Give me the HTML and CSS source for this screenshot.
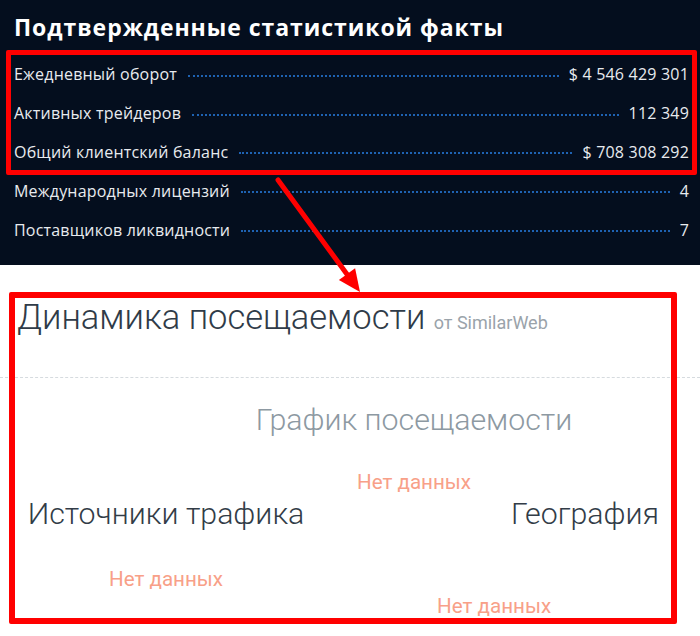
FILE: index.html
```html
<!DOCTYPE html>
<html lang="ru">
<head>
<meta charset="utf-8">
<title>Факты</title>
<link rel="stylesheet" href="styles.css">
</head>
<body>
<div class="page">
  <section class="facts">
    <h1 class="facts-title">Подтвержденные статистикой факты</h1>
    <ul class="facts-list">
      <li class="fact"><span class="fact-label">Ежедневный оборот</span><span class="fact-dots"></span><span class="fact-value">$ 4 546 429 301</span></li>
      <li class="fact"><span class="fact-label">Активных трейдеров</span><span class="fact-dots"></span><span class="fact-value">112 349</span></li>
      <li class="fact"><span class="fact-label">Общий клиентский баланс</span><span class="fact-dots"></span><span class="fact-value">$ 708 308 292</span></li>
      <li class="fact"><span class="fact-label">Международных лицензий</span><span class="fact-dots"></span><span class="fact-value">4</span></li>
      <li class="fact"><span class="fact-label">Поставщиков ликвидности</span><span class="fact-dots"></span><span class="fact-value">7</span></li>
    </ul>
  </section>
  <section class="traffic">
    <h2 class="traffic-title">Динамика посещаемости <small class="traffic-source">от SimilarWeb</small></h2>
    <hr class="traffic-sep">
    <div class="traffic-graph">
      <h3 class="block-title block-title-muted">График посещаемости</h3>
      <p class="no-data">Нет данных</p>
    </div>
    <div class="traffic-cols">
      <div class="traffic-col traffic-col-left">
        <h3 class="block-title">Источники трафика</h3>
        <p class="no-data no-data-left">Нет данных</p>
      </div>
      <div class="traffic-col traffic-col-right">
        <h3 class="block-title block-title-right">География</h3>
        <p class="no-data no-data-right">Нет данных</p>
      </div>
    </div>
  </section>
  <div class="mark mark-facts"></div>
  <div class="mark mark-traffic"></div>
  <svg class="mark-arrow" width="700" height="636" viewBox="0 0 700 636">
    <line x1="278" y1="180" x2="349" y2="277" stroke="#ff0000" stroke-width="5" stroke-linecap="round"/>
    <polygon points="360,292 338.9,280.1 355.1,268.3" fill="#ff0000"/>
  </svg>
</div>
</body>
</html>
```

FILE: styles.css
```css
html, body {
  margin: 0;
  padding: 0;
  background: #ffffff;
}

.page {
  position: relative;
  width: 700px;
  height: 636px;
  overflow: hidden;
}

/* ---------- dark facts panel ---------- */
.facts {
  height: 265px;
  box-sizing: border-box;
  background: #040e1e;
  padding: 13px 11px 0 14px;
  font-family: "Open Sans", "Noto Sans", sans-serif;
  color: #e8ebef;
}

.facts-title {
  margin: 0;
  font-size: 23px;
  line-height: 29px;
  font-weight: 700;
  letter-spacing: 0.95px;
  color: #ffffff;
}

.facts-list {
  list-style: none;
  margin: 13px 0 0;
  padding: 0;
}

.fact {
  display: flex;
  align-items: center;
  height: 38.8px;
  font-size: 16px;
  letter-spacing: 0.2px;
}

.fact-label,
.fact-value {
  white-space: nowrap;
}

.fact-dots {
  flex: 1;
  height: 0;
  margin: 3px 10px 0 11px;
  border-bottom: 2px dotted #1e62b2;
}

/* ---------- white traffic section ---------- */
.traffic {
  font-family: Roboto, "Noto Sans", sans-serif;
  font-weight: 300;
}

.traffic-title {
  margin: 0;
  padding: 32px 0 0 17px;
  font-size: 34.5px;
  line-height: 40px;
  font-weight: 300;
  color: #2f3b48;
}

.traffic-source {
  font-size: 18px;
  color: #9aa3aa;
  font-weight: 400;
}

.traffic-sep {
  margin: 34px 0 0;
  border: 0;
  border-top: 1px dashed #d6dbdf;
  height: 0;
}

.traffic-graph {
  margin-left: 128px;
  text-align: center;
  padding-top: 25px;
}

.block-title {
  margin: 0;
  font-size: 30.3px;
  line-height: 34px;
  font-weight: 300;
  color: #323c47;
}

.block-title-muted {
  color: #8d99a2;
}

.no-data {
  margin: 0;
  font-size: 20.6px;
  line-height: 24px;
  color: #f8a088;
  font-weight: 400;
}

.traffic-graph .no-data {
  margin-top: 33px;
}

.traffic-cols {
  display: flex;
  margin-top: 3px;
}

.traffic-col-left {
  width: 332px;
  text-align: center;
}

.traffic-col-right {
  flex: 1;
}

.block-title-right {
  text-align: right;
  padding-right: 41px;
}

.no-data-left {
  margin-top: 36px;
}

.no-data-right {
  margin-top: 63px;
  padding-left: 105px;
}

/* ---------- annotation marks ---------- */
.mark {
  position: absolute;
  box-sizing: border-box;
  border-style: solid;
  border-color: #ff0000;
  border-radius: 2px;
  pointer-events: none;
}

.mark-facts {
  left: 6px;
  top: 50px;
  width: 691px;
  height: 125px;
  border-width: 5px;
}

.mark-traffic {
  left: 9px;
  top: 292px;
  width: 668px;
  height: 332px;
  border-width: 6px;
}

.mark-arrow {
  position: absolute;
  left: 0;
  top: 0;
  pointer-events: none;
}
```
